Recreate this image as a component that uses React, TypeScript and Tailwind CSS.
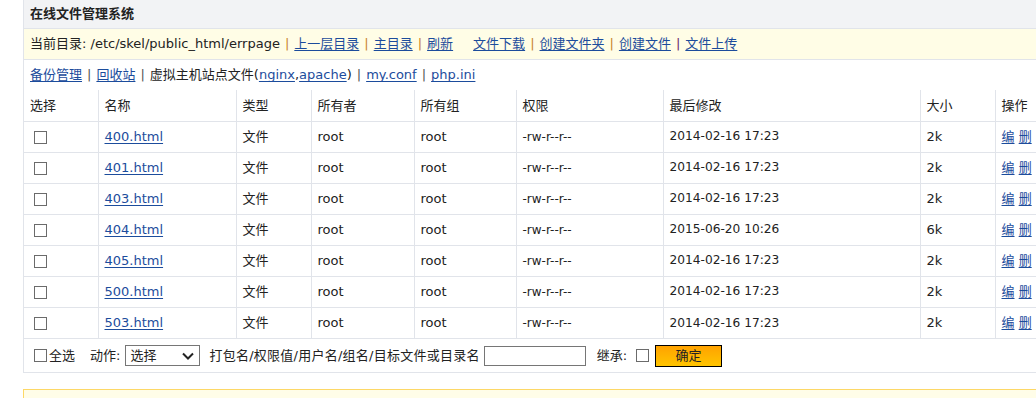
import React from 'react';

const FONT = "font-['DejaVu_Sans','Noto_Sans_CJK_SC',sans-serif]";

const files = [
  { name: '400.html', time: '2014-02-16 17:23', size: '2k' },
  { name: '401.html', time: '2014-02-16 17:23', size: '2k' },
  { name: '403.html', time: '2014-02-16 17:23', size: '2k' },
  { name: '404.html', time: '2015-06-20 10:26', size: '6k' },
  { name: '405.html', time: '2014-02-16 17:23', size: '2k' },
  { name: '500.html', time: '2014-02-16 17:23', size: '2k' },
  { name: '503.html', time: '2014-02-16 17:23', size: '2k' },
];

const Box = () => <span className="inline-block w-[13px] h-[13px] border border-[#6b6b6b] bg-white align-middle" />;

const A = ({ children }: { children: React.ReactNode }) => (
  <a className="text-[#1c4c9c] underline underline-offset-2 cursor-pointer">{children}</a>
);

const Sep = ({ c = 'text-[#c8822a]' }: { c?: string }) => <span className={`${c} mx-[5px]`}>|</span>;

const th = 'h-[31px] border border-[#e1e4ea] pl-[6px] text-left font-normal';
const td = 'h-[31px] border border-[#e1e4ea] pl-[6px]';

export default function App() {
  return (
    <div className={`w-[1036px] h-[398px] overflow-hidden bg-white flex text-[13px] text-[#222] ${FONT}`}>
      <div className="w-[2px] h-full bg-[#38a8e2]" />
      <div className="ml-[23px] w-[1030px] shrink-0">
        <div className="border border-[#e1e4ea] border-t-0">
          <div className="h-[29px] bg-[#f2f3f5] border-b border-[#e1e4ea] flex items-center pl-[6px] font-bold">
            在线文件管理系统
          </div>
          <div className="h-[31px] bg-[#fffde6] border-b border-[#e1e4ea] flex items-center pl-[6px] whitespace-nowrap">
            <span>当前目录: /etc/skel/public_html/errpage</span>
            <Sep />
            <A>上一层目录</A>
            <Sep />
            <A>主目录</A>
            <Sep />
            <A>刷新</A>
            <span className="w-[20px]" />
            <A>文件下载</A>
            <Sep />
            <A>创建文件夹</A>
            <Sep />
            <A>创建文件</A>
            <Sep c="text-[#6a2a6a]" />
            <A>文件上传</A>
          </div>
          <div className="h-[30px] flex items-center pl-[6px] whitespace-nowrap">
            <A>备份管理</A>
            <Sep c="text-[#555]" />
            <A>回收站</A>
            <Sep c="text-[#555]" />
            <span>虚拟主机站点文件(</span>
            <A>nginx</A>,<A>apache</A>
            <span>)</span>
            <Sep c="text-[#555]" />
            <A>my.conf</A>
            <Sep c="text-[#555]" />
            <A>php.ini</A>
          </div>
          <table className="w-full border-collapse border-hidden table-fixed">
            <colgroup>
              <col className="w-[74px]" />
              <col className="w-[138px]" />
              <col className="w-[75px]" />
              <col className="w-[103px]" />
              <col className="w-[102px]" />
              <col className="w-[147px]" />
              <col className="w-[257px]" />
              <col className="w-[75px]" />
              <col />
            </colgroup>
            <thead>
              <tr className="border-t border-[#e1e4ea]">
                <th className={th}>选择</th>
                <th className={th}>名称</th>
                <th className={th}>类型</th>
                <th className={th}>所有者</th>
                <th className={th}>所有组</th>
                <th className={th}>权限</th>
                <th className={th}>最后修改</th>
                <th className={th}>大小</th>
                <th className={th}>操作</th>
              </tr>
            </thead>
            <tbody>
              {files.map((f) => (
                <tr key={f.name}>
                  <td className={`${td} pl-[10px]`}><Box /></td>
                  <td className={td}><A>{f.name}</A></td>
                  <td className={td}>文件</td>
                  <td className={td}>root</td>
                  <td className={td}>root</td>
                  <td className={`${td} text-[12px]`}>-rw-r--r--</td>
                  <td className={`${td} text-[12.2px]`}>{f.time}</td>
                  <td className={td}>{f.size}</td>
                  <td className={`${td} whitespace-nowrap`}><A>编</A> <A>删</A></td>
                </tr>
              ))}
            </tbody>
          </table>
          <div className="h-[34px] border-t border-[#e1e4ea] flex items-center pl-[10px] whitespace-nowrap">
            <Box />
            <span className="ml-[2px]">全选</span>
            <span className="ml-[15px]">动作:</span>
            <div className="ml-[5px] w-[75px] h-[21px] border border-[#767676] flex items-center justify-between pl-[4px] pr-[5px]">
              <span>选择</span>
              <svg width="12" height="8" viewBox="0 0 12 8"><path d="M1 1.5l5 5 5-5" fill="none" stroke="#222" strokeWidth="2" /></svg>
            </div>
            <span className="ml-[9px] tracking-[0.25px]">打包名/权限值/用户名/组名/目标文件或目录名</span>
            <div className="ml-[4px] w-[102px] h-[20px] border border-[#767676] bg-white" />
            <span className="ml-[11px]">继承:</span>
            <span className="ml-[9px] flex"><Box /></span>
            <button className="ml-[6px] w-[67px] h-[22px] border border-black bg-gradient-to-b from-[#ffa200] to-[#ffc400] text-[13px]">确定</button>
          </div>
        </div>
        <div className="mt-[16px] h-[40px] border-t border-x border-[#fdd866] bg-[#fffde8]" />
      </div>
    </div>
  );
}
